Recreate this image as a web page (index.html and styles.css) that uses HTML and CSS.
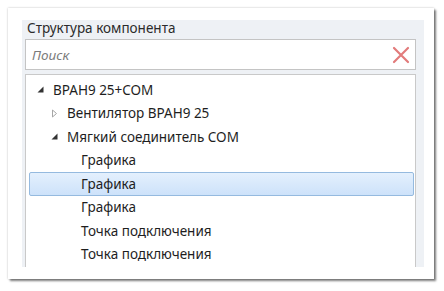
FILE: index.html
```html
<!DOCTYPE html>
<html lang="ru">
<head>
<meta charset="utf-8">
<link rel="stylesheet" href="styles.css">
</head>
<body>
<div class="card">
  <div class="group">
    <div class="group-title">Структура компонента</div>
    <div class="search">
      <span class="placeholder">Поиск</span>
      <svg class="clear" width="18" height="18" viewBox="0 0 18 18"><path d="M2 2 L16 16 M16 2 L2 16" stroke="#e27b7b" stroke-width="2.2" stroke-linecap="round" fill="none"/></svg>
    </div>
    <div class="tree">
      <div class="row lvl0"><span class="tg"><svg width="7" height="7" viewBox="0 0 7 7"><path d="M6.5 0.5 V6.5 H0.5 Z" fill="#333"/></svg></span><span>ВРАН9 25+COM</span></div>
      <div class="row lvl1"><span class="tg"><svg width="7" height="9" viewBox="0 0 7 9"><path d="M1.5 1 L5.5 4.5 L1.5 8 Z" fill="none" stroke="#a6a6a6"/></svg></span><span>Вентилятор ВРАН9 25</span></div>
      <div class="row lvl1"><span class="tg"><svg width="7" height="7" viewBox="0 0 7 7"><path d="M6.5 0.5 V6.5 H0.5 Z" fill="#333"/></svg></span><span>Мягкий соединитель COM</span></div>
      <div class="row lvl2"><span class="tg"></span><span>Графика</span></div>
      <div class="row lvl2 selected"><span class="tg"></span><span>Графика</span></div>
      <div class="row lvl2"><span class="tg"></span><span>Графика</span></div>
      <div class="row lvl2"><span class="tg"></span><span>Точка подключения</span></div>
      <div class="row lvl2"><span class="tg"></span><span>Точка подключения</span></div>
    </div>
  </div>
</div>
</body>
</html>
```

FILE: styles.css
```css
* { box-sizing: border-box; }
html, body { margin: 0; padding: 0; background: #ffffff; }
body {
  width: 444px;
  height: 291px;
  overflow: hidden;
  font-family: "Noto Sans", "Open Sans", sans-serif;
  font-size: 13.5px;
  color: #1e1e1e;
}
.card {
  margin: 8px 0 0 8px;
  width: 426px;
  height: 271px;
  background: #ffffff;
  box-shadow: 2px 2px 2px rgba(0,0,0,0.5), 0 0 2px rgba(0,0,0,0.25);
  padding: 12px 0 0 14px;
}
.group {
  width: 402px;
  height: 247px;
  overflow: hidden;
  background: #eef1f5;
  padding: 0 8px 0 3px;
  display: flex;
  flex-direction: column;
}
.group-title {
  height: 19px;
  line-height: 16px;
  padding-left: 2px;
  color: #2b2b2b;
}
.search {
  height: 31px;
  flex: none;
  background: #ffffff;
  border: 1px solid #c4c4c4;
  display: flex;
  align-items: center;
  justify-content: space-between;
  padding: 0 5px 0 6px;
}
.placeholder {
  font-style: italic;
  color: #7b7b7b;
}
.tree {
  margin-top: 4px;
  flex: 1;
  background: #ffffff;
  border: 1px solid #c9c9c9;
  border-bottom: none;
  padding-top: 3px;
  overflow: hidden;
}
.row {
  height: 23.5px;
  display: flex;
  align-items: center;
  margin: 0 1px 0 3px;
  border: 1px solid transparent;
  border-radius: 2px;
}
.lvl0 { padding-left: 7px; }
.lvl1 { padding-left: 21px; }
.lvl2 { padding-left: 35px; }
.tg {
  width: 16px;
  flex: none;
  display: flex;
  align-items: center;
}
.selected {
  background: linear-gradient(#e4f0fd, #cde2fa);
  border-color: #95badf;
}
```
